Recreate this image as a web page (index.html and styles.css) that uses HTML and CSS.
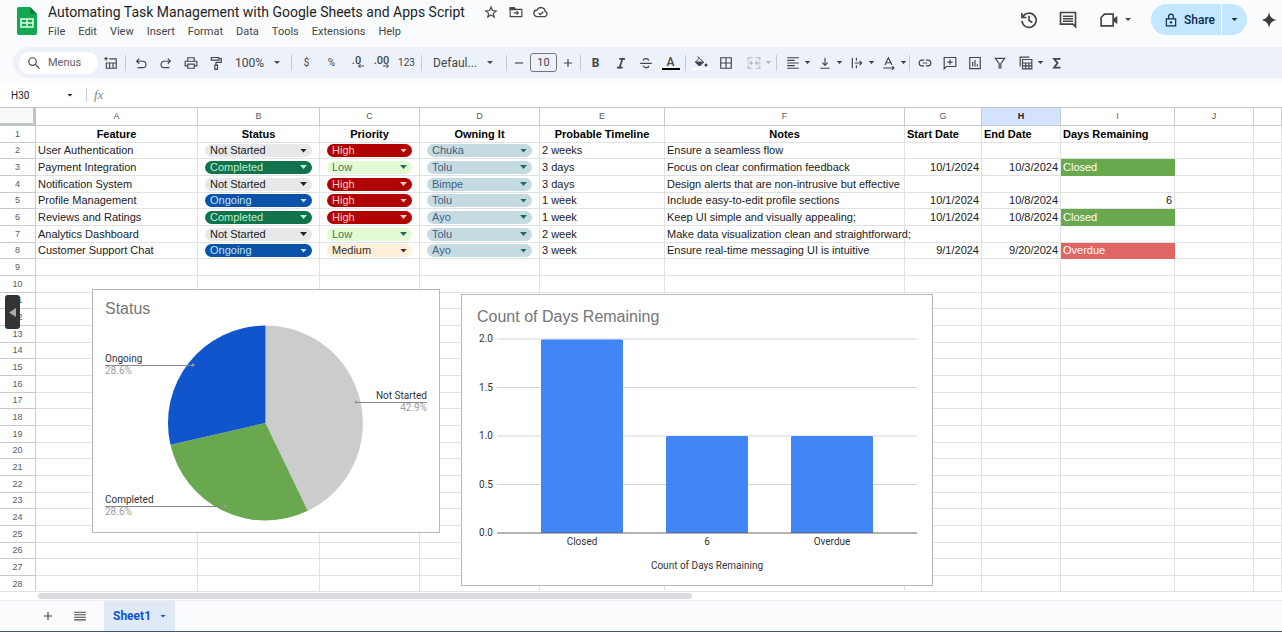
FILE: index.html
```html
<!DOCTYPE html>
<html lang="en">
<head>
<meta charset="utf-8">
<title>Automating Task Management with Google Sheets and Apps Script</title>
<link rel="stylesheet" href="styles.css">
</head>
<body>
<header class="top">
  <svg class="logo" viewBox="0 0 20 28"><path d="M2 0h11l7 7v19a2 2 0 0 1-2 2H2a2 2 0 0 1-2-2V2a2 2 0 0 1 2-2z" fill="#11a950"/><path d="M13 0l7 7h-5a2 2 0 0 1-2-2z" fill="#0b7d3b"/><path d="M4 12h12v8H4zM4 16h12M10 12v8" fill="none" stroke="#e9fbef" stroke-width="1.5"/></svg>
  <div class="heading">
    <div class="title-row">
      <h1>Automating Task Management with Google Sheets and Apps Script</h1>
      <button class="mini" aria-label="Star"><svg class="ic s14" viewBox="0 0 24 24"><path d="M12 3.500l2.500 6 6.500.6-5 4.200 1.600 6.300L12 17.200 6.400 20.600 8 14.300 3 10.100l6.500-.6z"/></svg></button>
      <button class="mini" aria-label="Move"><svg class="ic s14" viewBox="0 0 24 24"><path d="M2 5h7l2 2.500h11V20H2zM8 13.500h8M13 10.500l3 3-3 3"/><path d="M2 5h7l2 3H2z" fill="currentColor"/></svg></button>
      <button class="mini" aria-label="Saved to Drive"><svg class="ic s16" viewBox="0 0 24 24"><path d="M6.500 19a5 5 0 0 1-.5-10 6.500 6.500 0 0 1 12.300 2A4.200 4.200 0 0 1 18 19zM8.500 13.500l2.500 2.500 4.500-4.500"/></svg></button>
    </div>
    <nav class="menus"><button>File</button><button>Edit</button><button>View</button><button>Insert</button><button>Format</button><button>Data</button><button>Tools</button><button>Extensions</button><button>Help</button></nav>
  </div>
  <div class="actions">
    <button class="act" aria-label="Version history"><svg class="ic s20" viewBox="0 0 24 24"><path d="M4.500 8.500A8.500 8.500 0 1 1 3.600 13M3.500 3.500V9H9M12 7v5.500l4 2.500"/></svg></button>
    <button class="act" aria-label="Comments"><svg class="ic s20" viewBox="0 0 24 24"><path d="M3 3h18v17l-3-3H3zM6 7.500h12M6 10.500h12M6 13.500h12"/></svg></button>
    <button class="act video" aria-label="Meet"><svg class="ic s20" viewBox="0 0 24 24"><path d="M6.500 5H17v14H2.500V9z"/><path d="M18 11l3-2v6l-3-2z" fill="currentColor"/></svg><i class="caret"></i></button>
    <div class="share">
      <button class="share-main"><svg class="ic s14" viewBox="0 0 24 24"><path d="M4 10h16v12H4zM8 10V6a4 4 0 0 1 8 0v4"/><circle cx="12" cy="16" r="2" fill="currentColor" stroke="none"/></svg>Share</button>
      <button class="share-more" aria-label="Share options"><i class="caret"></i></button>
    </div>
    <button class="gem" aria-label="Gemini"><svg class="s16" viewBox="0 0 16 16"><path d="M8 0c.8 5 3 7.200 8 8-5 .8-7.200 3-8 8-.8-5-3-7.200-8-8 5-.8 7.200-3 8-8z" fill="#3c3c3c"/></svg></button>
  </div>
</header>

<div class="toolbar">
  <label class="search"><svg class="ic s14" viewBox="0 0 24 24"><circle cx="9.500" cy="9.500" r="6.500"/><path d="M14.500 14.500L21.500 21.500"/></svg><input type="text" placeholder="Menus" aria-label="Menus"></label>
  <button class="tool" aria-label="Tables"><svg class="ic s14" viewBox="0 0 24 24"><path d="M9 5h12v16H4V11M4 12h17M9.500 12v9M15.500 12v9M3.500 1.500v6M.5 4.500h6"/></svg></button>
  <i class="sep"></i>
  <button class="tool" aria-label="Undo"><svg class="ic s14" viewBox="0 0 24 24"><path d="M6 20h9a5.500 5.500 0 0 0 0-11H5M9 4.500L4.500 9 9 13.500"/></svg></button>
  <button class="tool" aria-label="Redo"><svg class="ic s14" viewBox="0 0 24 24"><path d="M18 20H9A5.500 5.500 0 0 1 9 9h10M15 4.500L19.500 9 15 13.500"/></svg></button>
  <button class="tool" aria-label="Print"><svg class="ic s14" viewBox="0 0 24 24"><path d="M6 17H2V9h20v8h-4M6.500 8.500V3h11v5.500M6.500 14h11v7h-11z"/></svg></button>
  <button class="tool" aria-label="Paint format"><svg class="ic s14" viewBox="0 0 24 24"><path d="M4 2.500h13V7H4zM17 4.500h4V11h-9v4M10 15.500h4.500V23H10z"/></svg></button>
  <label class="drop zoom"><select aria-label="Zoom"><option>100%</option></select><i class="caret"></i></label>
  <i class="sep"></i>
  <button class="tool sym">$</button>
  <button class="tool sym">%</button>
  <button class="tool dec" aria-label="Decrease decimals"><span>.0</span><svg class="ic arrow" viewBox="0 0 8 6"><path d="M7 3H1.500M3.500 1l-2 2 2 2"/></svg></button>
  <button class="tool dec" aria-label="Increase decimals"><span>.00</span><svg class="ic arrow" viewBox="0 0 8 6"><path d="M1 3h5.500M4.500 1l2 2-2 2"/></svg></button>
  <button class="tool sym">123</button>
  <i class="sep"></i>
  <label class="drop font"><select aria-label="Font"><option>Defaul...</option></select><i class="caret"></i></label>
  <i class="sep"></i>
  <button class="tool step" aria-label="Decrease font size"><svg class="ic s14" viewBox="0 0 24 24"><path d="M5 12h14"/></svg></button>
  <input class="size" type="text" value="10" aria-label="Font size">
  <button class="tool step" aria-label="Increase font size"><svg class="ic s14" viewBox="0 0 24 24"><path d="M5 12h14M12 5v14"/></svg></button>
  <i class="sep"></i>
  <button class="tool bold">B</button>
  <button class="tool" aria-label="Italic"><svg class="ic s14 heavy" viewBox="0 0 24 24"><path d="M9 5h10M5 20h10M14.500 5l-5 15"/></svg></button>
  <button class="tool" aria-label="Strikethrough"><svg class="ic s14" viewBox="0 0 24 24"><path d="M2 12.500h20M17 8c-.6-2.300-2.500-3.500-5-3.500-2.700 0-4.700 1.200-4.700 3.200M7 16.500c.6 2.300 2.500 3.500 5 3.500 2.700 0 4.800-1.300 4.800-3.500"/></svg></button>
  <button class="tool color" aria-label="Text color"><span>A</span><b class="swatch dark"></b></button>
  <i class="sep"></i>
  <button class="tool color" aria-label="Fill color"><svg class="ic fill" viewBox="0 0 14 12"><path d="M3.500 0.500L9.500 6l-4 4-4-4 4-4"/><path d="M1.500 6h8l-4 4z" fill="currentColor"/><circle cx="12" cy="9" r="1.500" fill="currentColor" stroke="none"/></svg><b class="swatch light"></b></button>
  <button class="tool" aria-label="Borders"><svg class="ic s14" viewBox="0 0 24 24"><path d="M3 3h18v18H3zM12 3v18M3 12h18"/></svg></button>
  <button class="tool dropt off" aria-label="Merge cells"><svg class="ic s14" viewBox="0 0 24 24"><path d="M9 3H2v5M15 3h7v5M9 21H2v-5M15 21h7v-5M1 12h8M6 9l3 3-3 3M23 12h-8M18 9l-3 3 3 3"/></svg><i class="caret"></i></button>
  <i class="sep"></i>
  <button class="tool dropt" aria-label="Horizontal align"><svg class="ic s14" viewBox="0 0 24 24"><path d="M2 3h20M2 7.500h13M2 12h20M2 16.500h13M2 21h20"/></svg><i class="caret"></i></button>
  <button class="tool dropt" aria-label="Vertical align"><svg class="ic s14" viewBox="0 0 24 24"><path d="M4 21h16M12 3v13M7.500 11.500L12 16l4.500-4.500"/></svg><i class="caret"></i></button>
  <button class="tool dropt" aria-label="Text wrapping"><svg class="ic s14" viewBox="0 0 24 24"><path d="M4 3v18M11 3v5M11 16v5M8 12h12M16.500 8.500L20 12l-3.500 3.500"/></svg><i class="caret"></i></button>
  <button class="tool dropt" aria-label="Text rotation"><svg class="ic s14" viewBox="0 0 24 24"><path d="M5 15.500L11 3l6 12.500M7 11.500h8M2 20.500h18M17.500 17.500l3 3-3 3"/></svg><i class="caret"></i></button>
  <i class="sep"></i>
  <button class="tool" aria-label="Insert link"><svg class="ic s14" viewBox="0 0 24 24"><path d="M10.500 17H7A5 5 0 0 1 7 7h3.500M13.500 7H17a5 5 0 0 1 0 10h-3.500M8 12h8"/></svg></button>
  <button class="tool" aria-label="Insert comment"><svg class="ic s14" viewBox="0 0 24 24"><path d="M2 2.500h20V18H6l-4 4zM12 6v9M7.500 10.500h9"/></svg></button>
  <button class="tool" aria-label="Insert chart"><svg class="ic s14" viewBox="0 0 24 24"><path d="M3 2.500h18v19H3zM8 10v8M12 7v11M16 14v4"/></svg></button>
  <button class="tool" aria-label="Filter"><svg class="ic s14" viewBox="0 0 24 24"><path d="M4 4h16l-6.500 9v7.500h-3V13z"/></svg></button>
  <button class="tool dropt" aria-label="Filter views"><svg class="ic s14" viewBox="0 0 24 24"><path d="M2 18V2h16M6 6h16v16H6zM6 12h16M6 17h16M11.500 12v10M17 12v10"/></svg><i class="caret"></i></button>
  <button class="tool" aria-label="Functions"><svg class="ic s14 heavy" viewBox="0 0 24 24"><path d="M18 5H7l6 7.200L7 20h11"/></svg></button>
</div>

<div class="formula">
  <input class="name" type="text" value="H30" aria-label="Name box"><i class="caret"></i>
  <span class="fx">fx</span>
  <input class="entry" type="text" aria-label="Formula">
</div>

<main class="grid">
<table>
<colgroup><col class="w-row"><col class="w-a"><col class="w-b"><col class="w-c"><col class="w-d"><col class="w-e"><col class="w-f"><col class="w-g"><col class="w-h"><col class="w-i"><col class="w-j"><col></colgroup>
<thead><tr><th class="corner"></th><th>A</th><th>B</th><th>C</th><th>D</th><th>E</th><th>F</th><th>G</th><th class="sel">H</th><th>I</th><th>J</th><th></th></tr></thead>
<tbody>
<tr class="names"><th>1</th><td>Feature</td><td>Status</td><td>Priority</td><td>Owning It</td><td>Probable Timeline</td><td>Notes</td><td class="l">Start Date</td><td class="l">End Date</td><td class="l">Days Remaining</td><td></td><td></td></tr>
<tr><th>2</th><td>User Authentication</td><td><label class="chip gray"><select aria-label="Status"><option>Not Started</option></select></label></td><td><label class="chip red"><select aria-label="Priority"><option>High</option></select></label></td><td><label class="chip sky"><select aria-label="Owner"><option>Chuka</option></select></label></td><td>2 weeks</td><td>Ensure a seamless flow</td><td></td><td></td><td></td><td></td><td></td></tr>
<tr><th>3</th><td>Payment Integration</td><td><label class="chip green"><select aria-label="Status"><option>Completed</option></select></label></td><td><label class="chip lime"><select aria-label="Priority"><option>Low</option></select></label></td><td><label class="chip sky"><select aria-label="Owner"><option>Tolu</option></select></label></td><td>3 days</td><td>Focus on clear confirmation feedback</td><td class="r">10/1/2024</td><td class="r">10/3/2024</td><td class="closed">Closed</td><td></td><td></td></tr>
<tr><th>4</th><td>Notification System</td><td><label class="chip gray"><select aria-label="Status"><option>Not Started</option></select></label></td><td><label class="chip red"><select aria-label="Priority"><option>High</option></select></label></td><td><label class="chip sky"><select aria-label="Owner"><option>Bimpe</option></select></label></td><td>3 days</td><td>Design alerts that are non-intrusive but effective</td><td></td><td></td><td></td><td></td><td></td></tr>
<tr><th>5</th><td>Profile Management</td><td><label class="chip blue"><select aria-label="Status"><option>Ongoing</option></select></label></td><td><label class="chip red"><select aria-label="Priority"><option>High</option></select></label></td><td><label class="chip sky"><select aria-label="Owner"><option>Tolu</option></select></label></td><td>1 week</td><td>Include easy-to-edit profile sections</td><td class="r">10/1/2024</td><td class="r">10/8/2024</td><td class="r">6</td><td></td><td></td></tr>
<tr><th>6</th><td>Reviews and Ratings</td><td><label class="chip green"><select aria-label="Status"><option>Completed</option></select></label></td><td><label class="chip red"><select aria-label="Priority"><option>High</option></select></label></td><td><label class="chip sky"><select aria-label="Owner"><option>Ayo</option></select></label></td><td>1 week</td><td>Keep UI simple and visually appealing;</td><td class="r">10/1/2024</td><td class="r">10/8/2024</td><td class="closed">Closed</td><td></td><td></td></tr>
<tr><th>7</th><td>Analytics Dashboard</td><td><label class="chip gray"><select aria-label="Status"><option>Not Started</option></select></label></td><td><label class="chip lime"><select aria-label="Priority"><option>Low</option></select></label></td><td><label class="chip sky"><select aria-label="Owner"><option>Tolu</option></select></label></td><td>2 week</td><td>Make data visualization clean and straightforward;</td><td></td><td></td><td></td><td></td><td></td></tr>
<tr><th>8</th><td>Customer Support Chat</td><td><label class="chip blue"><select aria-label="Status"><option>Ongoing</option></select></label></td><td><label class="chip cream"><select aria-label="Priority"><option>Medium</option></select></label></td><td><label class="chip sky"><select aria-label="Owner"><option>Ayo</option></select></label></td><td>3 week</td><td>Ensure real-time messaging UI is intuitive</td><td class="r">9/1/2024</td><td class="r">9/20/2024</td><td class="overdue">Overdue</td><td></td><td></td></tr>
<tr><th>9<td><td><td><td><td><td><td><td><td><td><td>
<tr><th>10<td><td><td><td><td><td><td><td><td><td><td>
<tr><th>11<td><td><td><td><td><td><td><td><td><td><td>
<tr><th>12<td><td><td><td><td><td><td><td><td><td><td>
<tr><th>13<td><td><td><td><td><td><td><td><td><td><td>
<tr><th>14<td><td><td><td><td><td><td><td><td><td><td>
<tr><th>15<td><td><td><td><td><td><td><td><td><td><td>
<tr><th>16<td><td><td><td><td><td><td><td><td><td><td>
<tr><th>17<td><td><td><td><td><td><td><td><td><td><td>
<tr><th>18<td><td><td><td><td><td><td><td><td><td><td>
<tr><th>19<td><td><td><td><td><td><td><td><td><td><td>
<tr><th>20<td><td><td><td><td><td><td><td><td><td><td>
<tr><th>21<td><td><td><td><td><td><td><td><td><td><td>
<tr><th>22<td><td><td><td><td><td><td><td><td><td><td>
<tr><th>23<td><td><td><td><td><td><td><td><td><td><td>
<tr><th>24<td><td><td><td><td><td><td><td><td><td><td>
<tr><th>25<td><td><td><td><td><td><td><td><td><td><td>
<tr><th>26<td><td><td><td><td><td><td><td><td><td><td>
<tr><th>27<td><td><td><td><td><td><td><td><td><td><td>
<tr><th>28<td><td><td><td><td><td><td><td><td><td><td>
</tbody>
</table>

<svg class="chart pie" width="348" height="244" viewBox="0 0 346 242" role="img" aria-label="Status">
  <text class="ct" x="12" y="24">Status</text>
  <path d="M172.500 133V35.500A97.500 97.500 0 0 1 214.800 220.800z" fill="#cccccc"/>
  <path d="M172.500 133L214.800 220.800A97.500 97.500 0 0 1 77.400 154.700z" fill="#6aa84f"/>
  <path d="M172.500 133L77.400 154.700A97.500 97.500 0 0 1 172.500 35.500z" fill="#1155cc"/>
  <path class="lead" d="M12 75.500H100M12 216.500H132M334 112.500H263"/>
  <g fill="#999"><circle cx="100" cy="75" r="1.500"/><circle cx="132" cy="216" r="1.500"/><circle cx="263" cy="112" r="1.500"/></g>
  <text class="cl" x="12" y="72">Ongoing</text><text class="cp" x="12" y="84">28.6%</text>
  <text class="cl" x="12" y="213">Completed</text><text class="cp" x="12" y="225">28.6%</text>
  <text class="cl end" x="334" y="109">Not Started</text><text class="cp end" x="334" y="121">42.9%</text>
</svg>

<svg class="chart bars" width="472" height="292" viewBox="0 0 470 290" role="img" aria-label="Count of Days Remaining">
  <text class="ct" x="15" y="27">Count of Days Remaining</text>
  <path d="M35 44h420M35 92.500h420M35 141h420M35 189.500h420" stroke="#d4d4d4" fill="none"/>
  <g fill="#4285f4"><path d="M79 238V45.500l1-1h80l1 1V238z"/><path d="M204 238v-96l1-1h80l1 1v96z"/><path d="M329 238v-96l1-1h80l1 1v96z"/></g>
  <path d="M35 238h420" stroke="#666" fill="none"/>
  <g class="cl end"><text x="31" y="47">2.0</text><text x="31" y="96">1.5</text><text x="31" y="144">1.0</text><text x="31" y="193">0.5</text><text x="31" y="241">0.0</text></g>
  <g class="cl mid"><text x="120" y="250">Closed</text><text x="245" y="250">6</text><text x="370" y="250">Overdue</text><text x="245" y="274">Count of Days Remaining</text></g>
</svg>
<button class="handle" aria-label="Show side panel"><svg viewBox="0 0 15 34"><path d="M11 13v9l-7-4.500z" fill="#aaa"/></svg></button>
</main>

<div class="scroll"><i class="thumb"></i></div>
<footer class="tabs">
  <button class="tabic" aria-label="Add sheet"><svg class="ic s14" viewBox="0 0 24 24"><path d="M5 12h14M12 5v14"/></svg></button>
  <button class="tabic" aria-label="All sheets"><svg class="ic s14" viewBox="0 0 24 24"><path d="M2 5.500h20M2 9.800h20M2 14.200h20M2 18.500h20"/></svg></button>
  <button class="tab">Sheet1<i class="caret"></i></button>
</footer>
</body>
</html>
```
FILE: styles.css
```css
* { box-sizing: border-box; }
body {
  margin: 0;
  height: 100vh;
  display: flex;
  flex-direction: column;
  overflow: hidden;
  background: #f9fbfd;
  color: #202124;
  font-family: "Liberation Sans", Arial, sans-serif;
  font-size: 11px;
}
button, select, input {
  font: inherit;
  color: inherit;
  background: none;
  border: 0;
  padding: 0;
  margin: 0;
  outline: 0;
  min-width: 0;
}
select { appearance: none; }
i { font-style: normal; }
svg { display: block; flex: none; }
.ic { fill: none; stroke: currentColor; stroke-width: 2; }
.heavy { stroke-width: 3; }
.s14 { width: 14px; height: 14px; }
.s16 { width: 16px; height: 16px; }
.s20 { width: 20px; height: 20px; }
.caret {
  flex: none;
  width: 6px;
  height: 3px;
  background: currentColor;
  clip-path: polygon(0 0, 100% 0, 50% 100%);
}

.top { display: flex; height: 47px; padding-left: 17px; color: #444746; font-family: Roboto, sans-serif; }
.logo { width: 20px; height: 28px; margin-top: 7px; }
.heading { margin-left: 11px; }
.title-row { display: flex; align-items: center; height: 24px; }
h1 { margin: 0 18px 0 0; font-size: 14px; font-weight: 400; color: #1f1f1f; white-space: nowrap; }
.mini { display: flex; justify-content: center; width: 25px; }
.title-row .mini:first-of-type { width: 17px; margin-right: 4px; }
.menus { display: flex; gap: 13px; line-height: 16px; }
.actions { display: flex; align-items: center; margin-left: auto; height: 39px; }
.act { display: flex; align-items: center; justify-content: center; width: 39px; }
.act.video { width: 44px; gap: 6px; margin: 0 14px 0 6px; }
.share { display: flex; height: 31px; border-radius: 16px; background: #c2e7ff; color: #0b2b4d; }
.share-main { display: flex; align-items: center; gap: 6px; padding: 0 6px 0 13px; font-size: 12px; font-weight: 500; }
.share-more { display: flex; align-items: center; justify-content: center; width: 26px; border-left: 1px solid #f9fbfd; }
.gem { margin-left: 14px; padding-right: 5px; }

.toolbar {
  display: flex;
  align-items: center;
  height: 31px;
  margin-left: 13px;
  padding-left: 6px;
  border-radius: 16px 0 0 16px;
  background: #edf2fa;
  color: #444746;
  font-family: Roboto, sans-serif;
  flex: none;
}
.search { display: flex; align-items: center; gap: 7px; width: 79px; height: 22px; padding-left: 8px; border-radius: 11px; background: #fff; }
.search input { width: 44px; }
.search input::placeholder { color: #5f6368; opacity: 1; }
.tool { display: flex; align-items: center; justify-content: center; width: 25px; height: 24px; flex: none; }
.dropt { width: 32px; }
.dropt .ic { margin: 0 5px 0 6px; }
.off { color: #b4b8bc; width: 36px; }
.sep { flex: none; width: 1px; height: 16px; margin: 0 2px; background: #c7cbd1; }
.drop { display: flex; align-items: center; justify-content: space-between; flex: none; font-size: 12px; }
.zoom { width: 61px; padding: 0 9px 0 7px; }
.font { width: 80px; padding: 0 11px 0 9px; }
.sym { font-size: 10px; }
.dec { flex-direction: column; font-size: 11px; font-weight: 500; line-height: 9px; }
.arrow { width: 8px; height: 6px; stroke-width: 1; align-self: flex-end; margin-right: 4px; margin-top: -2px; }
.step { width: 20px; }
.size { width: 27px; height: 19px; margin: 0 1px; border: 1px solid #747775; border-radius: 3px; text-align: center; }
.bold { font-size: 12px; font-weight: 700; }
.color { flex-direction: column; font-size: 12px; font-weight: 500; line-height: 12px; }
.swatch { width: 18px; height: 2px; }
.dark { background: #000; }
.light { background: #fff; }
.fill { width: 14px; height: 12px; stroke-width: 1; }

.formula { display: flex; align-items: center; height: 24px; margin-top: 5px; padding-left: 11px; background: #fff; flex: none; }
.name { width: 56px; font-family: Roboto, sans-serif; font-size: 10px; }
.fx { margin-left: 13px; padding-left: 7px; border-left: 1px solid #c7cbd1; color: #80868b; font: italic 13px/14px "Liberation Serif", serif; }
.entry { flex: 1; margin-left: 8px; }

.grid { position: relative; flex: 1; min-height: 0; overflow: hidden; background: #fff; }
table { width: 100%; table-layout: fixed; border-collapse: separate; border-spacing: 0; border-top: 1px solid #c4c7c5; }
.w-row { width: 36px; }
.w-a { width: 162px; }
.w-b { width: 122px; }
.w-c { width: 100px; }
.w-d { width: 120px; }
.w-e { width: 125px; }
.w-f { width: 240px; }
.w-g { width: 77px; }
.w-h { width: 79px; }
.w-i { width: 114px; }
.w-j { width: 79px; }
th, td { padding: 0 2px; border: 0 solid #e1e3e3; border-width: 0 1px 1px 0; line-height: 15px; white-space: nowrap; }
th { border-color: #c9cccc; color: #575b5f; font-size: 9px; font-weight: 400; }
thead th { height: 18px; }
thead th.corner { background: #f8f9fa; border: 0 solid #c0c4c4; border-width: 0 3px 3px 0; }
thead th.sel { background: #d3e3fd; color: #202124; font-weight: 700; }
tbody tr { height: 17px; }
tbody tr:nth-child(3n+2) { height: 16px; }
.names td { font-weight: 700; text-align: center; color: #000; }
.names td.l { text-align: left; }
.r { text-align: right; }
.closed { background: #6aa84f; border-color: #6aa84f; color: #fff; }
.overdue { background: #e06666; border-color: #e06666; color: #fff; }
.chip { display: flex; align-items: center; height: 13px; margin: 0 5px; padding: 0 5px; border-radius: 7px; }
.chip select { flex: 1; height: 13px; line-height: 13px; }
.chip::after { content: ""; width: 7px; height: 4px; background: currentColor; clip-path: polygon(0 0, 100% 0, 50% 100%); }
.gray { background: #e6e8ea; color: #202124; }
.green { background: #11734b; color: #bfeecb; }
.blue { background: #0a53a8; color: #bfe1f6; }
.red { background: #b10202; color: #ffcfc9; }
.lime { background: #e3fbd2; color: #3f7a55; }
.cream { background: #fdefd8; color: #33302c; }
.sky { background: #c6dbe1; color: #3d6184; }
.sky::after, .lime::after { background: #1b6e5a; }

.chart { position: absolute; background: #fff; border: 1px solid #b4b9b9; }
.pie { left: 92px; top: 182px; }
.bars { left: 461px; top: 187px; }
.ct { font-size: 16px; fill: #757575; }
.cl { font-family: Roboto, sans-serif; font-size: 10px; fill: #333; }
.cp { font-family: Roboto, sans-serif; font-size: 10px; fill: #9e9e9e; }
.end { text-anchor: end; }
.mid { text-anchor: middle; }
.lead { fill: none; stroke: #8a8a8a; }
.handle { position: absolute; left: 5px; top: 188px; width: 15px; height: 34px; border-radius: 3px; background: #333; }

.scroll { flex: none; height: 10px; padding: 1px 0 0 38px; background: #fff; border-top: 1px solid #e1e3e3; border-bottom: 1px solid #eceff1; }
.thumb { display: block; width: 52.6%; height: 6px; border-radius: 3px; background: #dadce0; }
.tabs { display: flex; flex: none; height: 31px; padding-left: 32px; border-bottom: 1px solid #44546f; color: #444746; }
.tabic { display: flex; align-items: center; justify-content: center; width: 32px; }
.tab { display: flex; align-items: center; gap: 9px; margin-left: 8px; padding: 0 9px; background: #e1e9f7; color: #0b57d0; font-family: Roboto, sans-serif; font-size: 12px; font-weight: 700; }
```
